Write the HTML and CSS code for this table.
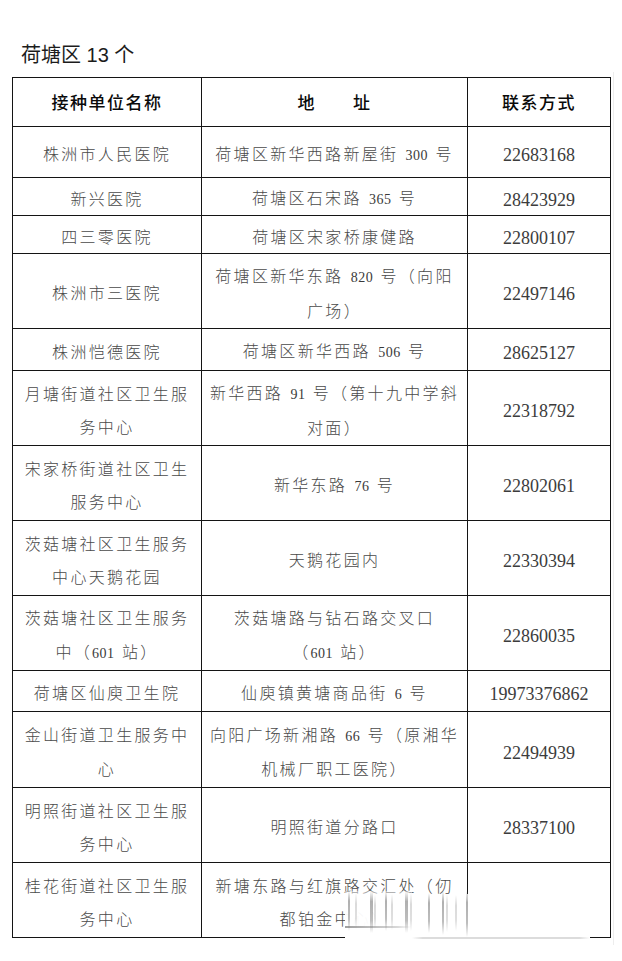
FILE: index.html
```html
<!DOCTYPE html>
<html lang="zh-CN">
<head>
<meta charset="utf-8">
<title>荷塘区 13 个</title>
<link rel="stylesheet" href="styles.css">
</head>
<body>
<div class="page">
  <div class="title">荷塘区 13 个</div>
  <div class="sheet">
    <table class="list">
      <colgroup>
        <col class="c-name">
        <col class="c-addr">
        <col class="c-tel">
      </colgroup>
      <thead>
        <tr class="h-head">
          <th>接种单位名称</th>
          <th>地　　址</th>
          <th>联系方式</th>
        </tr>
      </thead>
      <tbody>
        <tr class="h-51">
          <td>株洲市人民医院</td>
          <td>荷塘区新华西路新屋街 <span class="num">300</span> 号</td>
          <td class="tel">22683168</td>
        </tr>
        <tr class="h-38">
          <td>新兴医院</td>
          <td>荷塘区石宋路 <span class="num">365</span> 号</td>
          <td class="tel">28423929</td>
        </tr>
        <tr class="h-38">
          <td>四三零医院</td>
          <td>荷塘区宋家桥康健路</td>
          <td class="tel">22800107</td>
        </tr>
        <tr class="h-75">
          <td>株洲市三医院</td>
          <td class="ml">荷塘区新华东路 <span class="num">820</span> 号（向阳<br>广场）</td>
          <td class="tel">22497146</td>
        </tr>
        <tr class="h-42">
          <td>株洲恺德医院</td>
          <td>荷塘区新华西路 <span class="num">506</span> 号</td>
          <td class="tel">28625127</td>
        </tr>
        <tr class="h-75">
          <td class="ml">月塘街道社区卫生服<br>务中心</td>
          <td class="ml">新华西路 <span class="num">91</span> 号（第十九中学斜<br>对面）</td>
          <td class="tel">22318792</td>
        </tr>
        <tr class="h-75">
          <td class="ml">宋家桥街道社区卫生<br>服务中心</td>
          <td>新华东路 <span class="num">76</span> 号</td>
          <td class="tel">22802061</td>
        </tr>
        <tr class="h-75">
          <td class="ml">茨菇塘社区卫生服务<br>中心天鹅花园</td>
          <td>天鹅花园内</td>
          <td class="tel">22330394</td>
        </tr>
        <tr class="h-75">
          <td class="ml">茨菇塘社区卫生服务<br>中（<span class="num">601</span> 站）</td>
          <td class="ml">茨菇塘路与钻石路交叉口<br>（<span class="num">601</span> 站）</td>
          <td class="tel">22860035</td>
        </tr>
        <tr class="h-41">
          <td>荷塘区仙庾卫生院</td>
          <td>仙庾镇黄塘商品街 <span class="num">6</span> 号</td>
          <td class="tel">19973376862</td>
        </tr>
        <tr class="h-76">
          <td class="ml">金山街道卫生服务中<br>心</td>
          <td class="ml">向阳广场新湘路 <span class="num">66</span> 号（原湘华<br>机械厂职工医院）</td>
          <td class="tel">22494939</td>
        </tr>
        <tr class="h-75">
          <td class="ml">明照街道社区卫生服<br>务中心</td>
          <td>明照街道分路口</td>
          <td class="tel">28337100</td>
        </tr>
        <tr class="h-75">
          <td class="ml">桂花街道社区卫生服<br>务中心</td>
          <td class="ml">新塘东路与红旗路交汇处（仞<br>都铂金中心）</td>
          <td class="tel"></td>
        </tr>
      </tbody>
    </table>
  </div>
</div>
<div class="watermark" aria-hidden="true"></div>
</body>
</html>
```
FILE: styles.css
```css
html, body {
  margin: 0;
  padding: 0;
  background: #ffffff;
}

.page {
  padding-top: 41px;
}

.title {
  margin-left: 21px;
  font-family: "Liberation Sans", "Noto Sans CJK SC", sans-serif;
  font-size: 20px;
  line-height: 28px;
  color: #1c1c1c;
}

.sheet {
  margin-top: 3px;
  padding: 5px 0 7px;
  width: 613px;
  border-right: 1px solid #ededed;
}

.list {
  margin-left: 12px;
  width: 598px;
  table-layout: fixed;
  border-collapse: collapse;
}

.c-name { width: 189px; }
.c-addr { width: 266px; }
.c-tel { width: 143px; }

.list th,
.list td {
  border: 1px solid #141414;
  text-align: center;
  vertical-align: middle;
  white-space: nowrap;
}

.list th {
  padding: 0;
  font-family: "Noto Sans CJK SC", sans-serif;
  font-weight: 500;
  font-size: 17px;
  line-height: 24px;
  letter-spacing: 1.5px;
  color: #0a0a0a;
}

.list td {
  padding: 6px 0 0;
  font-family: "Liberation Serif", "Noto Sans CJK SC", serif;
  font-weight: 300;
  font-size: 16px;
  line-height: 28px;
  letter-spacing: 2.3px;
  word-spacing: 1px;
  color: #4a4a4a;
}

.list td.ml {
  line-height: 33.5px;
}

.list td.tel {
  font-size: 18px;
  letter-spacing: 0;
  word-spacing: 0;
  color: #3c3c3c;
}

.num {
  font-size: 14px;
  letter-spacing: 0.5px;
  color: #3a3a3a;
}

.h-head { height: 49px; }
.h-51 { height: 51px; }
.h-38 { height: 38px; }
.h-41 { height: 41px; }
.h-42 { height: 42px; }
.h-75 { height: 75px; }
.h-76 { height: 76px; }

/* blurred watermark patch lying over the last row */
.watermark {
  --bar: linear-gradient(to bottom, rgba(110,110,110,0), rgba(110,110,110,.55) 25%, rgba(110,110,110,.45) 70%, rgba(110,110,110,0));
  --barlt: linear-gradient(to bottom, rgba(150,150,150,0), rgba(150,150,150,.35) 30%, rgba(150,150,150,.3) 70%, rgba(150,150,150,0));
  position: absolute;
  left: 345px;
  top: 891px;
  width: 245px;
  height: 50px;
  background:
    var(--bar) 3px 0 / 2px 40px no-repeat,
    var(--barlt) 10px 2px / 2px 36px no-repeat,
    var(--bar) 25px 0 / 3px 42px no-repeat,
    var(--barlt) 29px 4px / 2px 34px no-repeat,
    var(--bar) 40px 0 / 2px 40px no-repeat,
    var(--barlt) 46px 3px / 2px 36px no-repeat,
    var(--bar) 60px 0 / 3px 42px no-repeat,
    var(--barlt) 65px 2px / 2px 38px no-repeat,
    var(--bar) 83px 2px / 2px 40px no-repeat,
    var(--bar) 97px 0 / 2px 44px no-repeat,
    var(--barlt) 101px 3px / 2px 38px no-repeat,
    var(--barlt) 110px 4px / 2px 36px no-repeat,
    var(--bar) 121px 0 / 2px 46px no-repeat,
    linear-gradient(to right, rgba(120,120,120,.7), rgba(160,160,160,.4) 80%, rgba(160,160,160,0)) 0 35px / 66px 2px no-repeat,
    linear-gradient(to right, rgba(200,200,200,0), #dcdcdc 6%, #dcdcdc 94%, rgba(200,200,200,0)) 67px 46px / 178px 2px no-repeat,
    linear-gradient(to bottom, rgba(255,255,255,.85), #ffffff 12%) 67px 3px / 178px 44px no-repeat,
    linear-gradient(to bottom, rgba(255,255,255,.4), rgba(255,255,255,.92) 20%, #ffffff 90%) 0 0 / 67px 50px no-repeat;
}
```
